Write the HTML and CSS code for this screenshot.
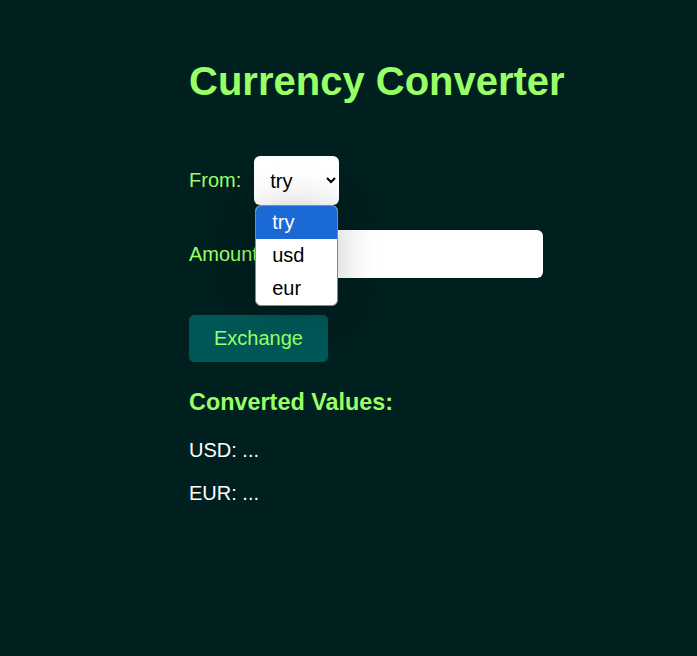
FILE: index.html
```html
<!DOCTYPE html>
<html>
<head>
<meta charset="utf-8">
<title>Currency Converter</title>
<link rel="stylesheet" href="styles.css">
</head>
<body>
<div class="container">
  <h1 class="title">Currency Converter</h1>
  <div class="row">
    <label class="label" for="from">From:</label>
    <div class="select-wrap">
      <select id="from" class="select">
        <option>try</option>
        <option>usd</option>
        <option>eur</option>
      </select>
      <ul class="popup">
        <li class="opt active">try</li>
        <li class="opt">usd</li>
        <li class="opt">eur</li>
      </ul>
    </div>
  </div>
  <div class="row row-amount">
    <label class="label" for="amount">Amount:</label>
    <input id="amount" class="input" type="text">
  </div>
  <button class="btn">Exchange</button>
  <h3 class="subtitle">Converted Values:</h3>
  <p class="value">USD: ...</p>
  <p class="value">EUR: ...</p>
</div>
</body>
</html>
```

FILE: styles.css
```css
html, body {
  margin: 0;
  padding: 0;
  background: #001f1f;
  height: 100%;
}
body {
  font-family: "Liberation Sans", Arial, sans-serif;
  font-size: 20px;
  color: #ffffff;
}
.container {
  padding: 34px 0 0 189px;
}
.title {
  font-size: 40px;
  font-weight: bold;
  color: #99ff66;
  margin: 24px 0 52px;
  line-height: 46px;
}
.row {
  display: flex;
  align-items: center;
  height: 49px;
  margin-bottom: 25px;
}
.row-amount {
  height: 48px;
  margin-bottom: 37px;
}
.label {
  color: #99ff66;
  margin-right: 13px;
}
.select-wrap {
  position: relative;
}
.select {
  display: block;
  width: 85px;
  height: 49px;
  font-family: "Liberation Sans", Arial, sans-serif;
  font-size: 20px;
  color: #000;
  background: #fff;
  border: none;
  border-radius: 6px;
  padding: 0 10px 0 12px;
  outline: none;
}
.popup {
  position: absolute;
  z-index: 10;
  left: 1px;
  top: 49px;
  width: 81px;
  margin: 0;
  padding: 0;
  list-style: none;
  background: #fff;
  border: 1px solid #8a8a8a;
  border-radius: 6px;
  overflow: hidden;
  box-shadow: 0 2px 40px rgba(0, 0, 0, 0.22);
}
.opt {
  height: 33px;
  line-height: 33px;
  padding-left: 16px;
  color: #000;
  font-size: 20px;
}
.opt.active {
  background: #1b69d4;
  color: #fff;
}
.input {
  width: 267px;
  height: 48px;
  box-sizing: border-box;
  border: none;
  border-radius: 6px;
  background: #fff;
  font-size: 20px;
  padding: 0 12px;
  outline: none;
}
.btn {
  display: block;
  width: 139px;
  height: 47px;
  padding: 0;
  font-family: "Liberation Sans", Arial, sans-serif;
  font-size: 20px;
  color: #99ff66;
  background: #005757;
  border: none;
  border-radius: 5px;
  margin: 0;
}
.subtitle {
  font-size: 23.4px;
  color: #99ff66;
  margin: 27px 0 23px;
}
.value {
  margin: 0 0 20px;
  line-height: 23px;
}
```
